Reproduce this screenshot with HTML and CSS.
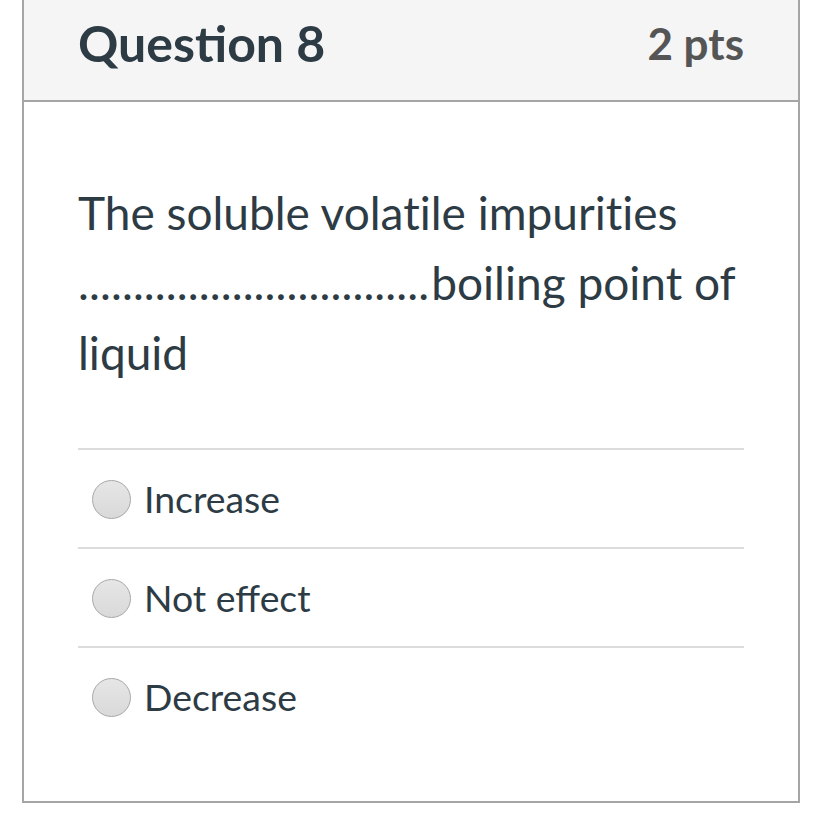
FILE: index.html
```html
<!DOCTYPE html>
<html>
<head>
<meta charset="utf-8">
<link rel="stylesheet" href="styles.css">
</head>
<body>
<div class="card">
  <div class="card-header">
    <span class="title">Question 8</span>
    <span class="pts">2 pts</span>
  </div>
  <div class="card-body">
    <p class="question">The soluble volatile impurities <span class="dots">................................</span>boiling point of liquid</p>
    <div class="answers">
      <label class="answer"><span class="radio"></span><span class="answer-text">Increase</span></label>
      <label class="answer"><span class="radio"></span><span class="answer-text">Not effect</span></label>
      <label class="answer"><span class="radio"></span><span class="answer-text">Decrease</span></label>
    </div>
  </div>
</div>
</body>
</html>
```

FILE: styles.css
```css
html, body {
  margin: 0;
  padding: 0;
  background: #ffffff;
}
body {
  font-family: Lato, "Liberation Sans", sans-serif;
  color: #2d3b45;
}
.card {
  margin-left: 22px;
  width: 778px;
  box-sizing: border-box;
  border: 2px solid #a5a5a5;
  border-top: none;
  height: 803px;
}
.card-header {
  box-sizing: content-box;
  height: 86px;
  padding: 0 54px 14px;
  background: #f5f5f5;
  border-bottom: 2px solid #a5a5a5;
  display: flex;
  align-items: center;
  justify-content: space-between;
}
.title {
  font-weight: 700;
  font-size: 50px;
  color: #2d3b45;
}
.pts {
  font-weight: 700;
  font-size: 44px;
  color: #555555;
}
.card-body {
  padding: 0 54px;
}
.question {
  margin: 0;
  padding-top: 76px;
  padding-bottom: 60px;
  font-size: 46px;
  line-height: 70px;
  font-variant-ligatures: none;
}
.dots {
  letter-spacing: 0.12px;
  margin-right: 2px;
}
.answers {
  display: flex;
  flex-direction: column;
}
.answer {
  display: flex;
  align-items: center;
  height: 97px;
  border-top: 2px solid #dcdcdc;
  padding-left: 14px;
}
.radio {
  width: 37px;
  height: 37px;
  border-radius: 50%;
  border: 1px solid #a8a8a8;
  background: linear-gradient(#e6e6e6, #d9d9d9);
  flex: none;
  margin-top: 2px;
}
.answer-text {
  margin-left: 13px;
  font-size: 37.4px;
}
```
